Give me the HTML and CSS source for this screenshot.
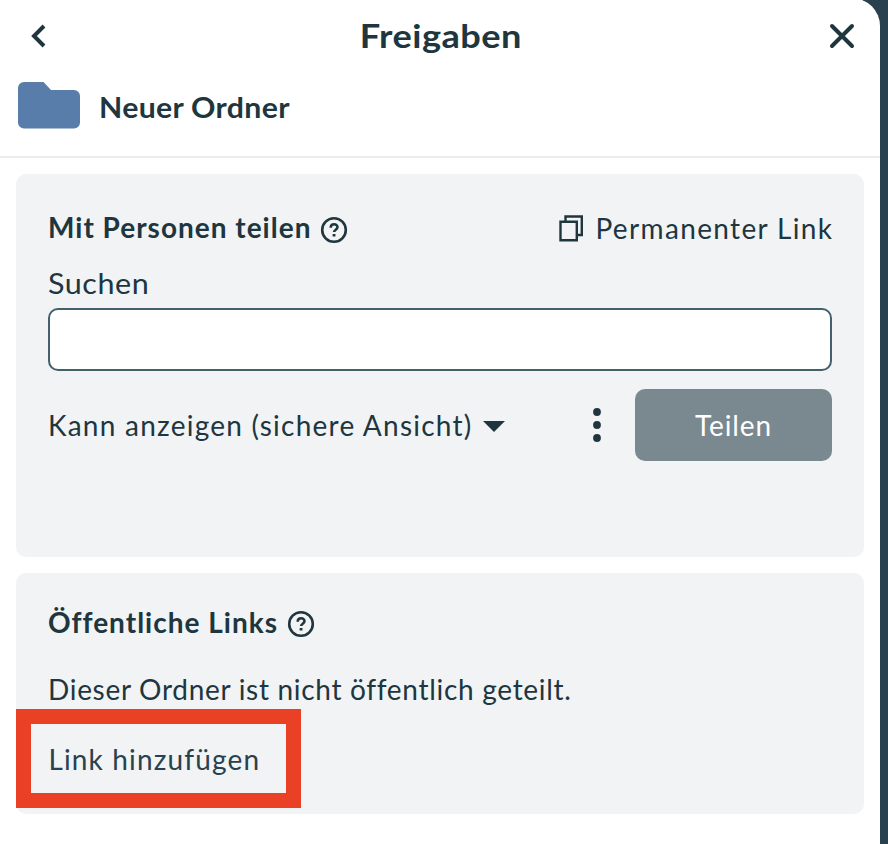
FILE: index.html
```html
<!DOCTYPE html>
<html lang="de">
<head>
<meta charset="utf-8">
<title>Freigaben</title>
<link rel="stylesheet" href="styles.css">
</head>
<body>
<aside class="sidebar">
  <header class="topbar">
    <svg class="back" width="24" height="30" viewBox="0 0 24 30"><path d="M17 5 7 15l10 10"/></svg>
    <h1><span class="t-title">Freigaben</span></h1>
    <svg class="close" width="30" height="30" viewBox="0 0 30 30"><path d="M5 5l20 20M25 5 5 25"/></svg>
  </header>
  <div class="resource">
    <svg class="folder" width="62" height="47" viewBox="0 0 62 47"><path d="M6 0H25.500L33 8H56a6 6 0 0 1 6 6V40.500a6 6 0 0 1-6 6H6a6 6 0 0 1-6-6V6a6 6 0 0 1 6-6Z"/></svg>
    <h2><span class="t-name">Neuer Ordner</span></h2>
  </div>
  <main class="content">
    <section class="card people">
      <div class="card-head">
        <h3><span class="t-people">Mit Personen teilen</span></h3>
        <svg class="help" width="28" height="28" viewBox="0 0 28 28"><circle cx="14" cy="14" r="11.800"/><path d="M10.700 11.700c0-4.600 6.800-4.400 6.800-.6 0 2.700-3.400 2.500-3.400 5"/><rect x="12.600" y="18" width="2.900" height="2.600" rx=".5"/></svg>
        <a class="permalink">
          <svg class="copy" width="26" height="28" viewBox="0 0 26 28"><path d="M7.500 7V2.500h16.300v18.500H18.800M2.500 7.800h16.300v18.500H2.500Z"/></svg>
          <span class="t-perma">Permanenter Link</span>
        </a>
      </div>
      <label for="search"><span class="t-search">Suchen</span></label>
      <input id="search" class="search" type="text">
      <div class="actions">
        <span class="t-role">Kann anzeigen (sichere Ansicht)</span>
        <svg class="caret" width="22" height="11" viewBox="0 0 22 11"><path d="M0 0h22L11 11Z"/></svg>
        <svg class="dots" width="8" height="34" viewBox="0 0 8 34"><circle cx="4" cy="4" r="3.900"/><circle cx="4" cy="17" r="3.900"/><circle cx="4" cy="30" r="3.900"/></svg>
        <button type="button"><span class="t-share">Teilen</span></button>
      </div>
    </section>
    <section class="card links">
      <div class="card-head">
        <h3><span class="t-links">Öffentliche Links</span></h3>
        <svg class="help" width="28" height="28" viewBox="0 0 28 28"><circle cx="14" cy="14" r="11.800"/><path d="M10.700 11.700c0-4.600 6.800-4.400 6.800-.6 0 2.700-3.400 2.500-3.400 5"/><rect x="12.600" y="18" width="2.900" height="2.600" rx=".5"/></svg>
      </div>
      <p><span class="t-info">Dieser Ordner ist nicht öffentlich geteilt.</span></p>
      <a class="add-link"><span class="t-add">Link hinzufügen</span></a>
    </section>
  </main>
</aside>
</body>
</html>
```
FILE: styles.css
```css
* { box-sizing: border-box; }
body {
  margin: 0;
  height: 844px;
  overflow: hidden;
  background: #29414e;
  color: #20363f;
  font: 28px/36px Lato, "Open Sans", sans-serif;
  white-space: nowrap;
}
h1, h2, h3, p { margin: 0; font-size: inherit; }
svg { display: block; flex: none; fill: none; stroke: #20363f; }
.sidebar {
  width: 880px;
  height: 846px;
  margin-top: -2px;
  padding-top: 2px;
  background: #fff;
  border-top-right-radius: 28px;
}
.topbar {
  display: grid;
  grid-template-columns: 30px 1fr 30px;
  align-items: center;
  height: 72px;
  padding: 0 23px 0 25px;
}
.topbar h1 { text-align: center; font-size: 32px; line-height: 40px; }
.t-title { display: inline-block; letter-spacing: .4px; transform: scaleX(1.13); }
.t-name { display: inline-block; letter-spacing: .3px; transform: scaleX(1.08); transform-origin: left; }
.t-people { letter-spacing: 1px; }
.t-perma { letter-spacing: 1.35px; margin-right: -1.35px; }
.t-search { display: inline-block; letter-spacing: .5px; transform: scaleX(1.09); transform-origin: left; }
.t-role { letter-spacing: 1.24px; }
.t-share { letter-spacing: .9px; }
.t-links { letter-spacing: 1px; }
.t-info { letter-spacing: .7px; }
.t-add { letter-spacing: 1.15px; }
.back { stroke-width: 4; margin-left: 2px; }
.close { stroke-width: 4; stroke-linecap: round; }
.resource {
  display: flex;
  align-items: center;
  gap: 19px;
  height: 86px;
  padding: 0 18px 18px 17.5px;
  border-bottom: 2px solid #ebecee;
}
.folder { fill: #587dab; stroke: none; }
.resource h2 { padding-top: 3px; }
.content { display: grid; gap: 16px; padding: 16px; }
.card { padding: 0 32px; border-radius: 10px; background: #f1f3f5; }
.people { height: 383px; padding-top: 36px; }
.links { height: 241px; padding-top: 31px; }
.card-head { display: flex; align-items: center; height: 36px; }
.people h3 { margin-top: -2px; }
.help { margin: 4px 0 0 9px; stroke-width: 2.6; }
.help rect { fill: #20363f; stroke: none; }
.permalink { display: flex; align-items: center; gap: 11px; margin-left: auto; }
.copy { stroke-width: 2.4; }
label { display: block; margin-top: 19px; }
.search {
  display: block;
  width: 100%;
  height: 63px;
  margin-top: 7px;
  padding: 0 16px;
  border: 2px solid #41616d;
  border-radius: 10px;
  background: #fff;
  font: inherit;
  outline: 0;
}
.actions { display: flex; align-items: center; height: 72px; margin-top: 18px; }
.caret { margin: 2px 0 0 11px; fill: #20363f; stroke: none; }
.dots { margin-left: auto; fill: #20363f; stroke: none; }
button {
  width: 197px;
  height: 72px;
  margin-left: 34px;
  padding: 0;
  border: 0;
  border-radius: 10px;
  background: #79898f;
  color: #fff;
  font: inherit;
}
.links p { margin-top: 31px; }
.add-link {
  display: flex;
  align-items: center;
  width: 285px;
  height: 99px;
  margin: 1.5px 0 0 -31.6px;
  padding-left: 17px;
  padding-top: 2px;
  border: 15px solid #ea4026;
  color: #29414e;
}
```
